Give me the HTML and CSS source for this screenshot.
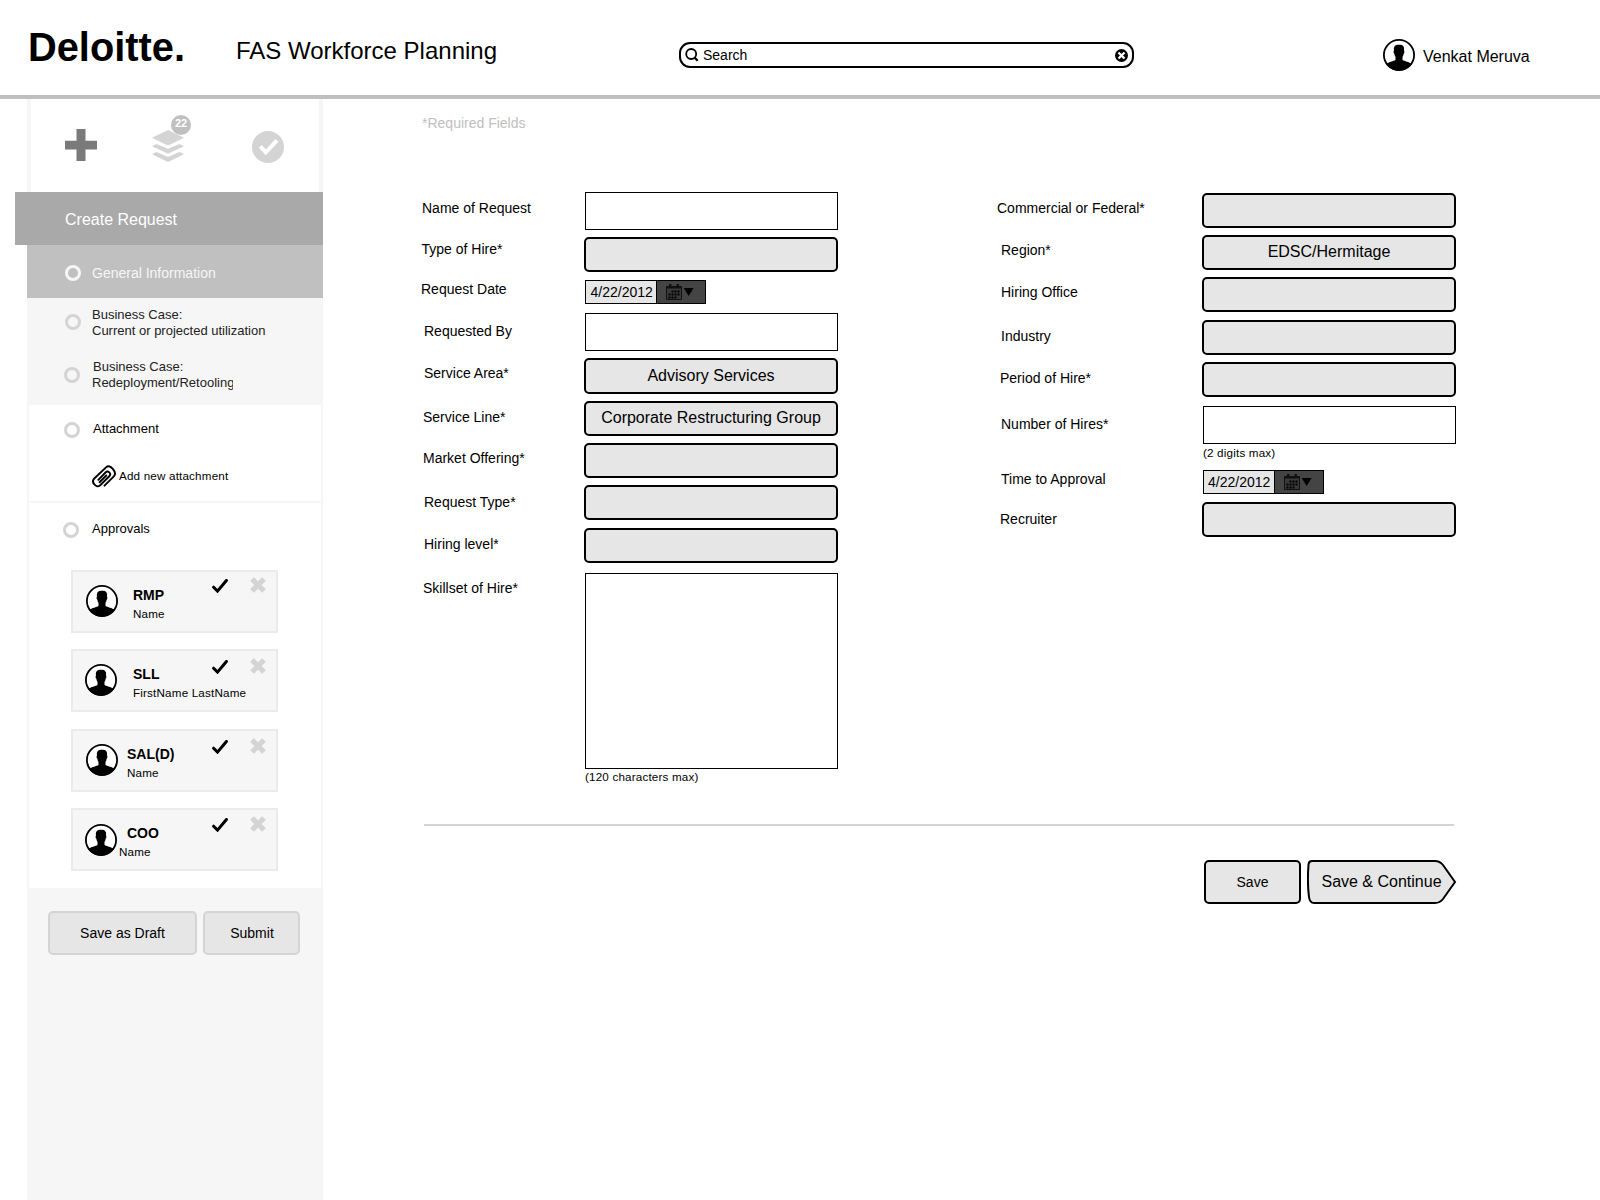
FILE: index.html
```html
<!DOCTYPE html>
<html lang="en">
<head>
    <meta charset="UTF-8">
    <meta name="viewport" content="width=device-width, initial-scale=1.0">
    <title>FAS Workforce Planning</title>

    <link rel="stylesheet" href="styles.css">
</head>
<body>

    <!-- shared icons -->
    <svg class="icon-defs" width="0" height="0">
        <symbol id="avatar" viewBox="0 0 32 32">
            <circle cx="16" cy="16" r="15.1" fill="#fff" stroke="#000" stroke-width="1.8"/>
            <path d="M16 5.700c-4.300 0-5.500 2-5 5.700-.700.500-.500 3 .400 3.400.1 1.500.6 2.500 1.100 3.100v3.200c-2 1.300-6.600 1.800-9.500 4A15.500 15.500 0 0 0 16 31.500a15.500 15.500 0 0 0 13-6.400c-2.900-2.200-7.500-2.700-9.500-4v-3.200c.5-.6 1-1.600 1.100-3.100.9-.4 1.100-2.900.4-3.400.5-3.700-.7-5.700-5-5.700z"/>
        </symbol>
        <symbol id="check" viewBox="0 0 16 14">
            <path d="M1.600 8.200L5.500 12.100L14.400 1.500" fill="none" stroke="#000" stroke-width="3" stroke-linecap="round"/>
        </symbol>
        <symbol id="cross" viewBox="0 0 16 16">
            <path d="M2 2L14 14M14 2L2 14" fill="none" stroke="#d4d4d4" stroke-width="5.300"/>
        </symbol>
        <symbol id="calendar" viewBox="0 0 28 16">
            <path d="M.5 2.500h15v13H.500z" fill="#3a3a3a" stroke="#111"/>
            <path d="M.5 2.500h15v2H.500zM3 0h2.500v4H3zM10.500 0H13v4h-2.500z" fill="#111"/>
            <path d="M5.500 7.500h8.500M2.500 10.500h11.500M2.500 13.500h8.500" stroke="#000" stroke-width="2" stroke-dasharray="2 1"/>
            <path d="M17.700 4h10l-5 8z"/>
        </symbol>
    </svg>

    <header class="header">
        <div class="logo">Deloitte.</div>
        <h1 class="title">FAS Workforce Planning</h1>

        <div class="search">
            <svg width="14" height="14" viewBox="0 0 14 14">
                <circle cx="6.200" cy="6" r="5" fill="none" stroke="#000" stroke-width="1.800"/>
                <path d="M9.500 9.500L12.700 12.700" stroke="#000" stroke-width="2.200"/>
            </svg>
            <span>Search</span>
            <svg class="clear" width="13" height="13" viewBox="0 0 13 13">
                <circle cx="6.500" cy="6.500" r="6.500"/>
                <path d="M3.500 3.500L9.500 9.500M9.500 3.500L3.500 9.500" stroke="#fff" stroke-width="2.300"/>
            </svg>
        </div>

        <div class="user">
            <svg width="32" height="32"><use href="#avatar"/></svg>
            <span>Venkat Meruva</span>
        </div>
    </header>

    <div class="page">

        <aside class="sidebar">
            <nav class="tools">
                <svg class="plus" width="32" height="32" viewBox="0 0 32 32">
                    <path d="M11.500 0h9v11.700h11.500v8.800H20.500v11.500h-9V20.500H0v-8.800h11.500z" fill="#7a7a7a"/>
                </svg>
                <div class="stack">
                    <svg width="32" height="32" viewBox="0 0 32 32" fill="#d4d4d4">
                        <path d="M16 0L32 7.700L16 15.400L0 7.700z"/>
                        <path d="M4.300 14L16 18.800L27.700 14L32 16.200L16 23.700L0 16.200z"/>
                        <path d="M4.300 22L16 27L27.700 22L32 24.200L16 32L0 24.200z"/>
                    </svg>
                    <span class="badge">22</span>
                </div>
                <svg class="done" width="32" height="32" viewBox="0 0 32 32">
                    <circle cx="16" cy="16" r="16" fill="#d4d4d4"/>
                    <path d="M8.300 15.300L13.800 21.300L25 9.300" fill="none" stroke="#fff" stroke-width="4"/>
                </svg>
            </nav>

            <div class="menu-title">Create Request</div>
            <div class="step active">
                <i class="ring"></i>
                <span>General Information</span>
            </div>
            <div class="cases">
                <div class="step case">
                    <i class="ring"></i>
                    <p>Business Case:<br>Current or projected utilization</p>
                </div>
                <div class="step case second">
                    <i class="ring"></i>
                    <p><span>Business Case:</span><br>Redeployment/Retooling</p>
                </div>
            </div>

            <div class="panel attachment">
                <div class="step">
                    <i class="ring"></i>
                    <span>Attachment</span>
                </div>
                <div class="add">
                    <svg width="24" height="23" viewBox="0 0 24 23" fill="none" stroke="#000" stroke-width="1.900" stroke-linecap="round">
                        <path d="M12.500 20.700L21.800 11.400C24.200 8.800 22.800 6.300 21 4.200C18.800 1.600 16.500.2 14 2.400L2.300 13.500C-.2 16 1.200 18.200 2.600 19.700C4.200 21.500 6.200 22 8.200 20.200L17.300 11.300C18.800 9.600 18.300 8.300 17.300 7.400C16.200 6.300 14.800 6.300 13.500 7.500L6.300 14.800"/>
                        <path d="M7.500 17.200L14.300 10.500"/>
                    </svg>
                    <span>Add new attachment</span>
                </div>
            </div>

            <div class="panel approvals">
                <div class="step">
                    <i class="ring"></i>
                    <span>Approvals</span>
                </div>

                <div class="card rmp">
                    <svg class="face" width="32" height="32"><use href="#avatar"/></svg>
                    <div class="who"><b>RMP</b><span>Name</span></div>
                    <svg class="yes" width="16" height="14"><use href="#check"/></svg>
                    <svg class="no" width="16" height="16"><use href="#cross"/></svg>
                </div>
                <div class="card sll">
                    <svg class="face" width="32" height="32"><use href="#avatar"/></svg>
                    <div class="who"><b>SLL</b><span>FirstName LastName</span></div>
                    <svg class="yes" width="16" height="14"><use href="#check"/></svg>
                    <svg class="no" width="16" height="16"><use href="#cross"/></svg>
                </div>
                <div class="card sal">
                    <svg class="face" width="32" height="32"><use href="#avatar"/></svg>
                    <div class="who"><b>SAL(D)</b><span>Name</span></div>
                    <svg class="yes" width="16" height="14"><use href="#check"/></svg>
                    <svg class="no" width="16" height="16"><use href="#cross"/></svg>
                </div>
                <div class="card coo">
                    <svg class="face" width="32" height="32"><use href="#avatar"/></svg>
                    <div class="who"><b>COO</b><span>Name</span></div>
                    <svg class="yes" width="16" height="14"><use href="#check"/></svg>
                    <svg class="no" width="16" height="16"><use href="#cross"/></svg>
                </div>
            </div>

            <div class="sidebar-footer">
                <button class="btn light draft">Save as Draft</button>
                <button class="btn light submit">Submit</button>
            </div>
        </aside>

        <main class="content">
            <p class="required">*Required Fields</p>

            <div class="form">
                <div class="column left">
                    <div class="row name"><label>Name of Request</label><div class="input"></div></div>
                    <div class="row type"><label>Type of Hire*</label><div class="select"></div></div>
                    <div class="row date"><label>Request Date</label>
                        <div class="datepicker"><span>4/22/2012</span><div><svg width="28" height="16"><use href="#calendar"/></svg></div></div>
                    </div>
                    <div class="row by"><label>Requested By</label><div class="input"></div></div>
                    <div class="row area"><label>Service Area*</label><div class="select tall">Advisory Services</div></div>
                    <div class="row line"><label>Service Line*</label><div class="select">Corporate Restructuring Group</div></div>
                    <div class="row market"><label>Market Offering*</label><div class="select"></div></div>
                    <div class="row reqtype"><label>Request Type*</label><div class="select"></div></div>
                    <div class="row level"><label>Hiring level*</label><div class="select"></div></div>
                    <div class="row skills"><label>Skillset of Hire*</label>
                        <div><div class="input area-input"></div><small>(120 characters max)</small></div>
                    </div>
                </div>

                <div class="column right">
                    <div class="row commercial"><label>Commercial or Federal*</label><div class="select"></div></div>
                    <div class="row region"><label>Region*</label><div class="select">EDSC/Hermitage</div></div>
                    <div class="row office"><label>Hiring Office</label><div class="select"></div></div>
                    <div class="row industry"><label>Industry</label><div class="select"></div></div>
                    <div class="row period"><label>Period of Hire*</label><div class="select"></div></div>
                    <div class="row number"><label>Number of Hires*</label>
                        <div><div class="input"></div><small>(2 digits max)</small></div>
                    </div>
                    <div class="row approval"><label>Time to Approval</label>
                        <div class="datepicker"><span>4/22/2012</span><div><svg width="28" height="16"><use href="#calendar"/></svg></div></div>
                    </div>
                    <div class="row recruiter"><label>Recruiter</label><div class="select"></div></div>
                </div>
            </div>

            <div class="actions">
                <button class="btn">Save</button>
                <button class="continue">
                    <svg width="150" height="44" viewBox="0 0 150 44">
                        <path d="M5 1H128C132 1 134 2.500 136 5L148 22L136 39C134 41.500 132 43 128 43H7C4 43 2.500 41 2 37C.8 28 .8 14 1.500 4.500C1.700 2 2.500 1 5 1z" fill="#e6e6e6" stroke="#000" stroke-width="2"/>
                    </svg>
                    <span>Save &amp; Continue</span>
                </button>
            </div>
        </main>

    </div>

</body>
</html>
```
FILE: styles.css
```css
* {
    box-sizing: border-box;
}

body {
    margin: 0;
    height: 1200px;
    overflow: hidden;
    display: flex;
    flex-direction: column;
    background-color: white;
    color: black;
    font: 14px/16px "Liberation Sans", Arial, sans-serif;
}

p {
    margin: 0;
}

svg {
    display: block;
    flex: none;
}

button {
    font: inherit;
    color: inherit;
    padding: 0;
}

.icon-defs {
    position: absolute;
}

/* header */
.header {
    display: flex;
    flex: none;
    align-items: flex-start;
    height: 99px;
    border-bottom: 4px solid #bfbfbf;
}

.logo {
    width: 208px;
    margin: 25px 0 0 28px;
    font-size: 39.8px;
    font-weight: bold;
    line-height: 44px;
}

.title {
    width: 443px;
    margin: 37px 0 0 0;
    font-size: 24px;
    font-weight: normal;
    line-height: 27px;
}

.search {
    display: flex;
    align-items: center;
    width: 455px;
    height: 26px;
    margin-top: 42px;
    padding: 0 4px;
    border: 2px solid black;
    border-radius: 11px;
}

.search span {
    margin-left: 4px;
}

.search .clear {
    margin-left: auto;
}

.user {
    display: flex;
    margin: 39px 0 0 249px;
    font-size: 16px;
    line-height: 17px;
}

.user span {
    margin: 9px 0 0 8px;
}

/* sidebar */
.page {
    display: flex;
    flex: 1;
}

.sidebar {
    display: flex;
    flex-direction: column;
    flex: none;
    width: 308px;
    margin-left: 15px;
}

.sidebar > * {
    margin-left: 12px;
}

.tools {
    display: flex;
    height: 93px;
    padding: 30px 0 0 34px;
    border: 4px solid #f6f6f6;
    border-width: 0 4px;
}

.stack {
    position: relative;
    margin: 1px 0 0 55px;
}

.badge {
    position: absolute;
    left: 19px;
    top: -15px;
    width: 20px;
    height: 20px;
    border-radius: 50%;
    background-color: #c0c0c0;
    color: white;
    font-size: 11px;
    font-weight: bold;
    line-height: 17px;
    text-align: center;
}

.done {
    margin: 2px 0 0 68px;
}

.menu-title {
    height: 53px;
    margin-left: 0;
    padding: 19px 0 0 50px;
    background-color: #a9a9a9;
    color: white;
    font-size: 16px;
    line-height: 17px;
}

.step {
    display: flex;
    font-size: 13px;
}

.ring {
    flex: none;
    width: 16px;
    height: 16px;
    border: 3px solid #d4d4d4;
    border-radius: 50%;
}

.step.active {
    height: 53px;
    padding: 20px 0 0 38px;
    background-color: #c0c0c0;
    color: #f6f6f6;
    font-size: 14px;
}

.active .ring {
    border-color: #f6f6f6;
}

.active span {
    margin-left: 11px;
}

.cases {
    height: 107px;
    padding: 9px 0 0 38px;
    background-color: #f6f6f6;
    color: #222;
}

.case .ring {
    margin-top: 7px;
}

.case p {
    margin-left: 11px;
}

.case.second {
    margin: 20px 0 0 -1px;
}

.second .ring {
    margin-top: 8px;
}

.second p {
    width: 141px;
    margin-left: 12px;
    overflow: hidden;
    white-space: nowrap;
}

.second span {
    margin-left: 1px;
}

.panel {
    border: 2px solid #f6f6f6;
    border-width: 0 2px;
}

.attachment {
    height: 98px;
    padding: 17px 0 0 35px;
    border-bottom-width: 2px;
}

.attachment .step span {
    margin: -1px 0 0 13px;
}

.add, .who span, small {
    font-size: 11.65px;
    line-height: 14px;
    letter-spacing: .18px;
}

.add {
    display: flex;
    margin: 27px 0 0 28px;
}

.add span {
    margin: 4px 0 0 3px;
}

.approvals {
    height: 385px;
    padding: 19px 0 0 34px;
}

.approvals .step span {
    margin: -1px 0 0 13px;
}

.card {
    display: flex;
    width: 207px;
    height: 63px;
    margin: 16px 0 0 8px;
    padding: 0 10px 0 13px;
    border: 2px solid #ebebeb;
    background-color: #f6f6f6;
}

.card.rmp {
    margin-top: 32px;
}

.card.sal {
    margin-top: 17px;
}

.face {
    margin-top: 13px;
}

.who {
    display: flex;
    flex-direction: column;
    width: 70px;
    margin: 15px 0 0 15px;
}

.who span {
    margin-top: 4px;
    white-space: nowrap;
}

.yes {
    margin: 7px 0 0 auto;
}

.no {
    margin: 5px 0 0 22px;
}

.sll .face, .coo .face {
    margin-left: -1px;
}

.sll .who {
    margin-left: 16px;
}

.sal .who {
    margin-left: 9px;
}

.coo .who {
    margin-left: 2px;
}

.coo .who b {
    margin-left: 8px;
}

.coo .face {
    margin-top: 14px;
}

.sll .yes, .sal .yes {
    margin-top: 9px;
}

.sll .no, .sal .no {
    margin-top: 7px;
}

.coo .yes {
    margin-top: 8px;
}

.coo .no {
    margin-top: 6px;
}

.sidebar-footer {
    display: flex;
    gap: 6px;
    flex: 1;
    padding: 23px 0 0 21px;
    background-color: #f6f6f6;
}

.btn {
    width: 97px;
    height: 44px;
    border: 2px solid black;
    border-radius: 5px;
    background-color: #e6e6e6;
}

.btn.light {
    border-color: #d4d4d4;
}

.btn.draft {
    width: 149px;
}

.btn.submit {
    padding-left: 1px;
}

/* form */
.content {
    width: 1036px;
    padding: 16px 0 0;
    margin-left: 97px;
}

.required {
    margin-left: 2px;
    color: #c0c0c0;
}

.form {
    display: flex;
    gap: 158px;
    padding-top: 61px;
    margin-right: -10px;
}

.column.left {
    width: 418px;
}

.right {
    width: 460px;
    padding-top: 1px;
}

.row {
    display: flex;
    margin-top: 7px;
}

.row:first-child {
    margin-top: 0;
}

.row label {
    width: 164px;
    padding: 7px 0 0 4px;
    white-space: nowrap;
}

.right .row label {
    width: 206px;
    padding-left: 5px;
}

.input {
    width: 253px;
    height: 38px;
    margin-left: 1px;
    border: 1px solid black;
    background-color: white;
}

.area-input {
    height: 196px;
}

.select {
    width: 254px;
    height: 35px;
    padding-top: 6px;
    border: 2px solid black;
    border-radius: 5px;
    background-color: #e6e6e6;
    font-size: 16px;
    line-height: 17px;
    text-align: center;
}

.select.tall {
    height: 36px;
    padding-top: 7px;
}

small {
    display: block;
    margin: 1px 0 0 1px;
}

.datepicker {
    display: flex;
    width: 121px;
    height: 24px;
    margin-left: 1px;
    border: 1px solid black;
    background-color: #e6e6e6;
}

.datepicker span {
    width: 70px;
    padding: 3px 0 0 4.5px;
}

.right .datepicker span {
    padding-left: 4px;
}

.datepicker div {
    flex: 1;
    padding: 3px 0 0 9px;
    border-left: 1px solid black;
    background-color: #444;
}

.left .name label { padding: 8px 0 0 2px; }
.left .type label { padding: 4px 0 0 1.5px; }
.left .date label { padding: 1px 0 0 1px; }
.left .by label { padding-top: 10px; }
.left .line label { padding: 8px 0 0 3px; }
.left .market label { padding-left: 3px; }
.left .reqtype label { padding-top: 9px; }
.left .level label { padding-top: 8px; }
.left .skills label { padding-left: 3px; }

.right .commercial label { padding-left: 1px; }
.right .industry label { padding-top: 8px; }
.right .period label { padding: 8px 0 0 4px; }
.right .number label { padding-top: 10px; }
.right .approval label { padding: 1px 0 0 5px; }
.right .recruiter label { padding: 9px 0 0 4px; }

.date, .level, .industry, .recruiter { margin-top: 8px; }
.by, .number { margin-top: 9px; }
.skills, .approval { margin-top: 10px; }

.number small {
    margin-top: 2px;
}

.actions {
    display: flex;
    gap: 6px;
    width: 1030px;
    margin: 40px 0 0 4px;
    padding: 34px 0 0 780px;
    border-top: 2px solid #d4d4d4;
}

.actions .btn {
    flex: none;
}

.continue {
    display: grid;
    place-items: center;
    border: 0;
    background: none;
    font-size: 16px;
    line-height: 17px;
}

.continue > * {
    grid-area: 1 / 1;
}

.continue span {
    padding: 0 1px 2px 0;
}
```
